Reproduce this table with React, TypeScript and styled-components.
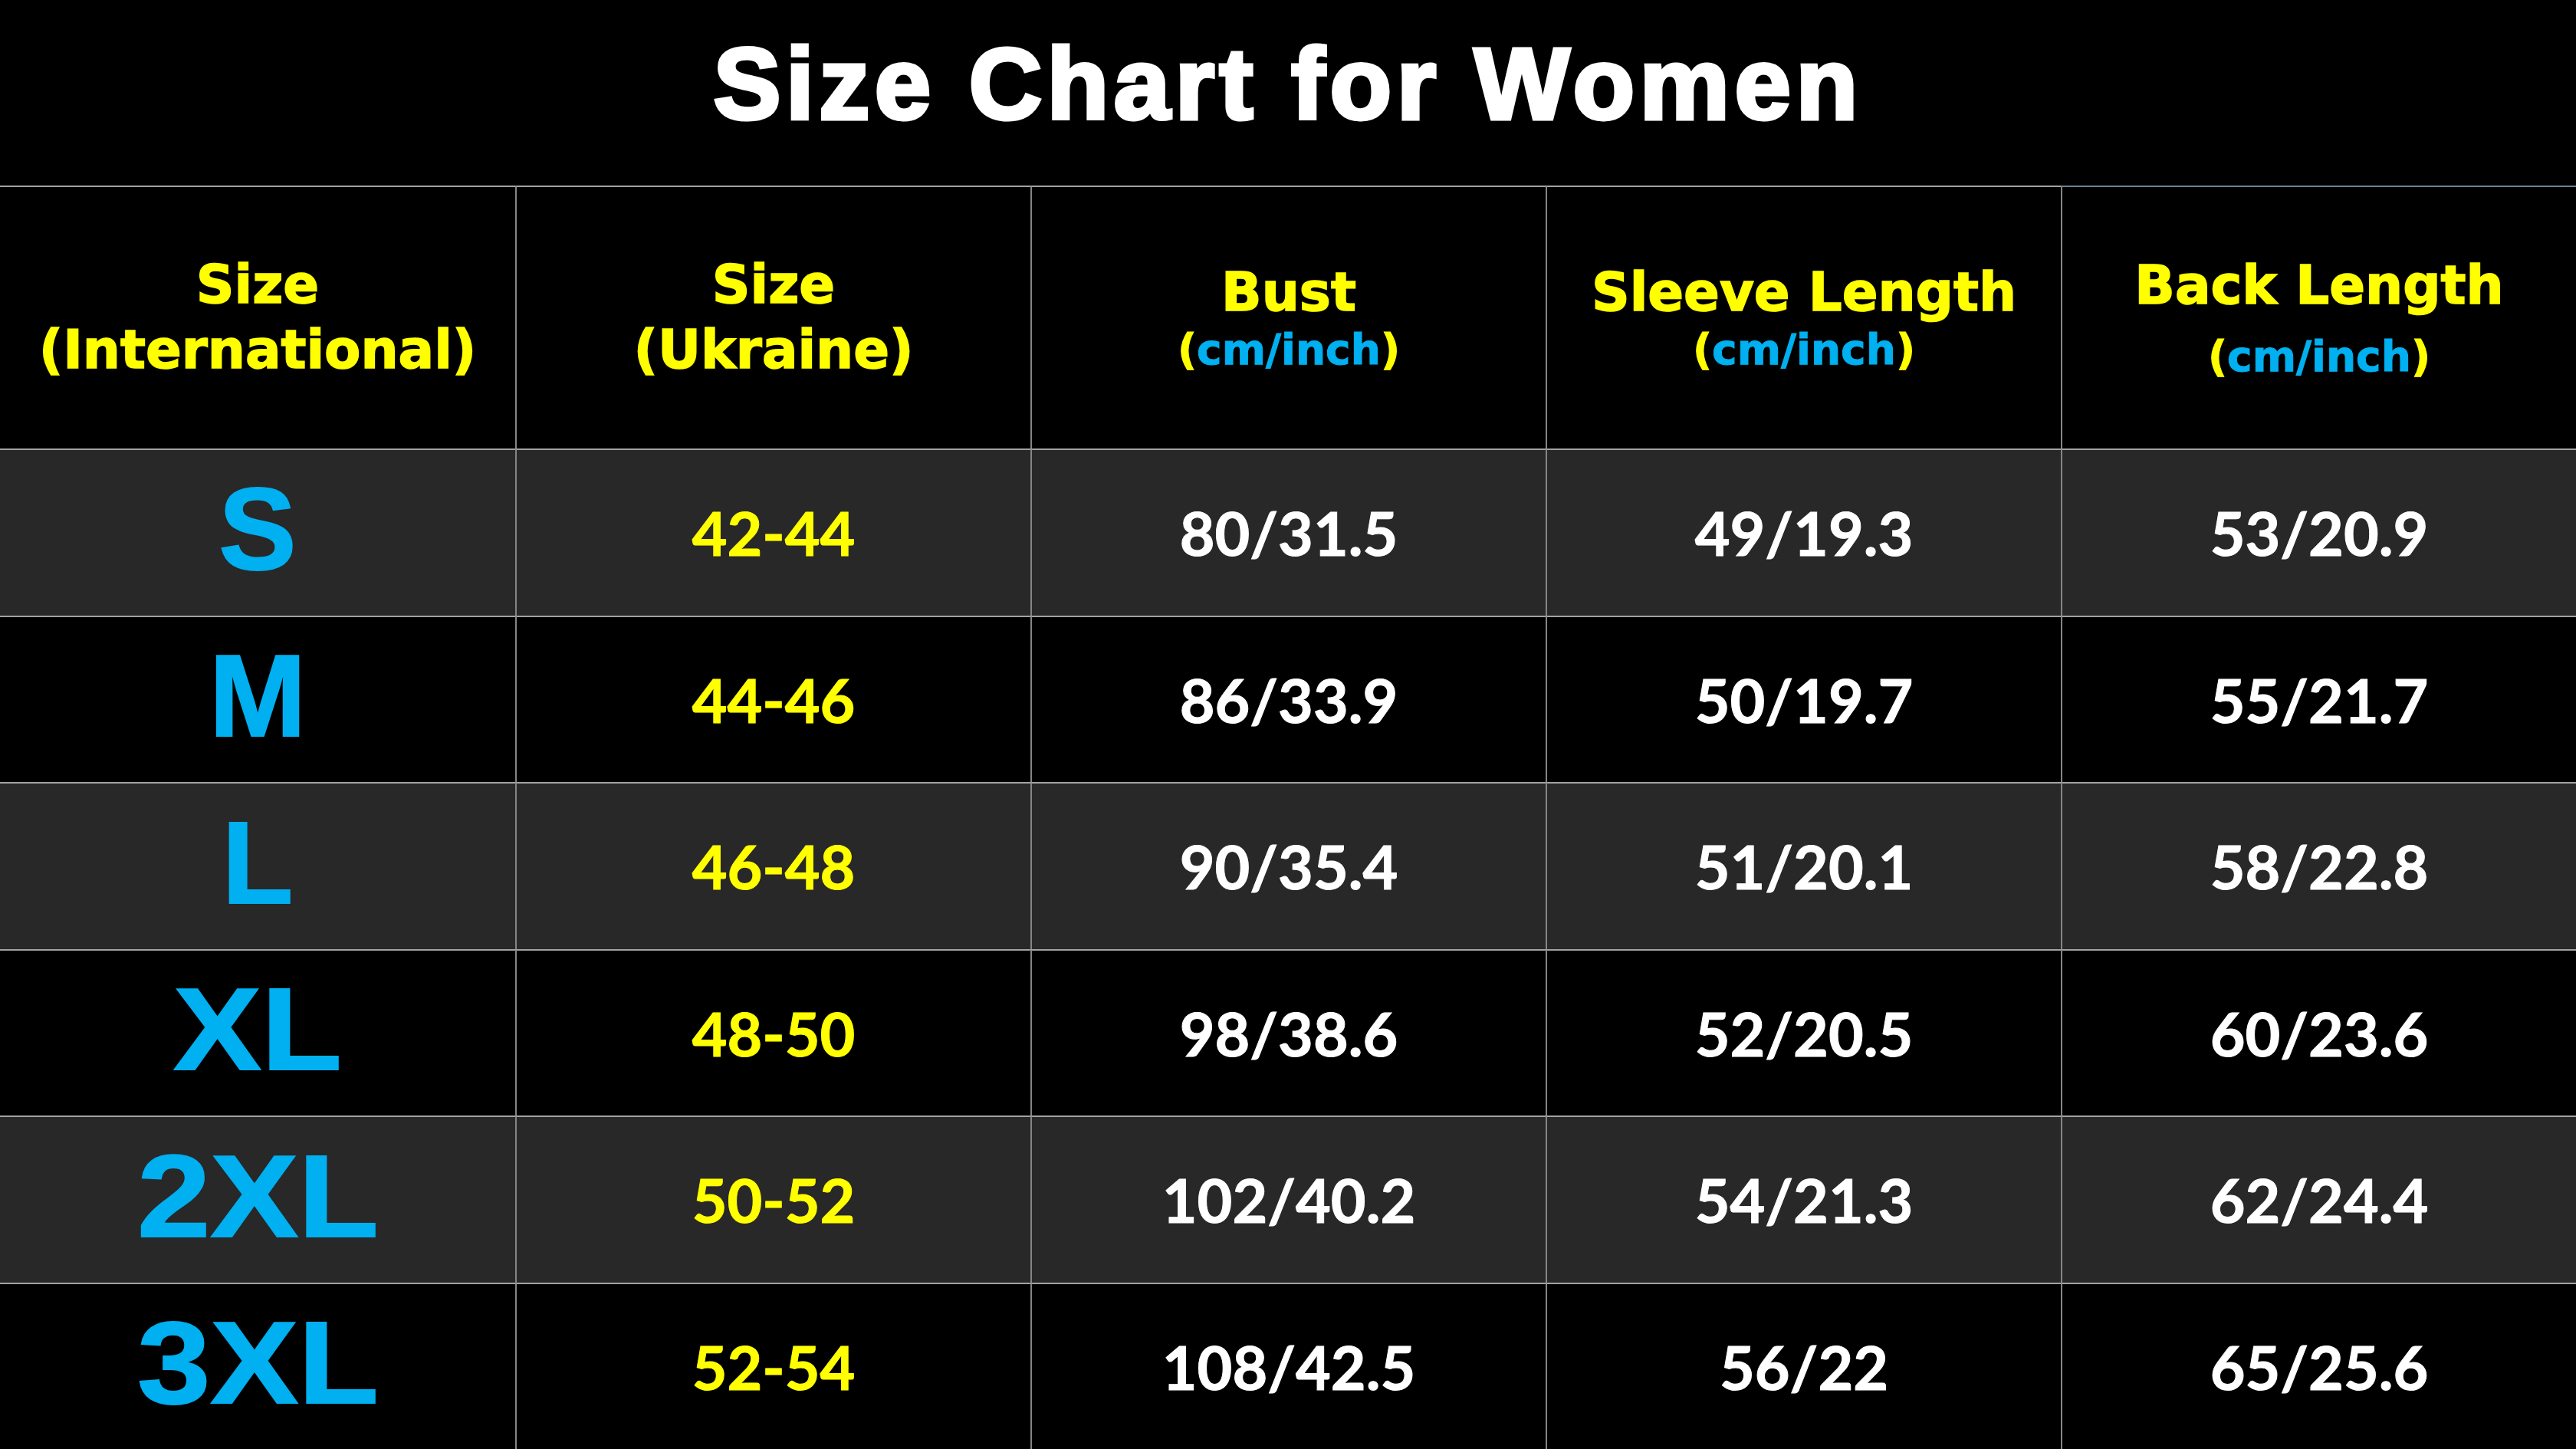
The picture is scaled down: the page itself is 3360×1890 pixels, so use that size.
import React from "react";
import styled, { createGlobalStyle } from "styled-components";

const GlobalStyle = createGlobalStyle`
  html, body {
    margin: 0;
    padding: 0;
    background: #000;
  }
  body {
    width: 3360px;
    height: 1890px;
    overflow: hidden;
  }
`;

const Page = styled.div`
  width: 3360px;
  height: 1890px;
  display: flex;
  flex-direction: column;
  background: #000;
`;

const TitleBar = styled.header`
  height: 242px;
  display: flex;
  align-items: center;
  justify-content: center;
  box-sizing: border-box;
  padding-bottom: 22px;
`;

const Title = styled.h1`
  margin: 0;
  font-family: "Liberation Sans", Arial, sans-serif;
  font-weight: 700;
  font-size: 132px;
  line-height: 1;
  color: #fff;
  letter-spacing: 6.5px;
  -webkit-text-stroke: 5px #fff;
`;

const Table = styled.div`
  flex: 1;
  display: grid;
  grid-template-columns: repeat(5, 1fr);
  grid-template-rows: 343px repeat(6, 1fr);
`;

const Cell = styled.div<{ $shade?: boolean; $first?: boolean; $topColor?: string; $lift?: number }>`
  box-sizing: border-box;
  display: flex;
  flex-direction: column;
  align-items: center;
  justify-content: center;
  padding-bottom: ${(p) => p.$lift || 0}px;
  background: ${(p) => (p.$shade ? "#282828" : "#000")};
  border-top: 2px solid ${(p) => p.$topColor || "#a3a3a3"};
  border-left: ${(p) => (p.$first ? "none" : "2px solid #858585")};
  min-width: 0;
`;

const HeadMain = styled.div`
  font-family: "DejaVu Sans", "Liberation Sans", sans-serif;
  font-weight: 700;
  font-size: 69px;
  line-height: 85px;
  color: #ffff00;
  white-space: nowrap;
  -webkit-text-stroke: 1.5px #ffff00;
`;

const HeadSub = styled.div<{ $offset: number }>`
  font-family: "DejaVu Sans", "Liberation Sans", sans-serif;
  font-weight: 700;
  font-size: 55px;
  line-height: 60px;
  color: #ffff00;
  white-space: nowrap;
  margin-top: ${(p) => p.$offset}px;
  -webkit-text-stroke: 1px currentColor;
`;

const Unit = styled.span`
  color: #00b0f0;
`;

const SizeLabel = styled.span<{ $wide?: boolean }>`
  display: inline-block;
  font-family: "Liberation Sans", Arial, sans-serif;
  font-weight: 700;
  font-size: 152px;
  line-height: 1;
  color: #00b0f0;
  margin-bottom: 10px;
  -webkit-text-stroke: 2px #00b0f0;
  transform: ${(p) => (p.$wide ? "scaleX(1.13)" : "none")};
`;

const Value = styled.span<{ $yellow?: boolean }>`
  font-family: "Lato", "Liberation Sans", sans-serif;
  font-weight: 700;
  font-size: 79px;
  line-height: 1;
  color: ${(p) => (p.$yellow ? "#ffff00" : "#ffffff")};
  white-space: nowrap;
  -webkit-text-stroke: 1px currentColor;
`;

type Row = {
  intl: string;
  ua: string;
  bust: string;
  sleeve: string;
  back: string;
};

const rows: Row[] = [
  { intl: "S", ua: "42-44", bust: "80/31.5", sleeve: "49/19.3", back: "53/20.9" },
  { intl: "M", ua: "44-46", bust: "86/33.9", sleeve: "50/19.7", back: "55/21.7" },
  { intl: "L", ua: "46-48", bust: "90/35.4", sleeve: "51/20.1", back: "58/22.8" },
  { intl: "XL", ua: "48-50", bust: "98/38.6", sleeve: "52/20.5", back: "60/23.6" },
  { intl: "2XL", ua: "50-52", bust: "102/40.2", sleeve: "54/21.3", back: "62/24.4" },
  { intl: "3XL", ua: "52-54", bust: "108/42.5", sleeve: "56/22", back: "65/25.6" },
];

const UnitLine: React.FC<{ offset: number }> = ({ offset }) => (
  <HeadSub $offset={offset}>
    (<Unit>cm/inch</Unit>)
  </HeadSub>
);

export default function App() {
  return (
    <>
      <GlobalStyle />
      <Page>
        <TitleBar>
          <Title>Size Chart for Women</Title>
        </TitleBar>
        <Table>
          <Cell $first $lift={2}>
            <HeadMain>Size</HeadMain>
            <HeadMain>(International)</HeadMain>
          </Cell>
          <Cell $lift={2}>
            <HeadMain>Size</HeadMain>
            <HeadMain>(Ukraine)</HeadMain>
          </Cell>
          <Cell $lift={4}>
            <HeadMain>Bust</HeadMain>
            <UnitLine offset={2} />
          </Cell>
          <Cell $lift={4}>
            <HeadMain>Sleeve Length</HeadMain>
            <UnitLine offset={2} />
          </Cell>
          <Cell $topColor="#6f7f9a" $lift={4}>
            <HeadMain>Back Length</HeadMain>
            <UnitLine offset={20} />
          </Cell>
          {rows.map((r, i) => {
            const shade = i % 2 === 0;
            return (
              <React.Fragment key={r.intl}>
                <Cell $first $shade={shade}>
                  <SizeLabel $wide={r.intl.length > 1}>{r.intl}</SizeLabel>
                </Cell>
                <Cell $shade={shade}>
                  <Value $yellow>{r.ua}</Value>
                </Cell>
                <Cell $shade={shade}>
                  <Value>{r.bust}</Value>
                </Cell>
                <Cell $shade={shade}>
                  <Value>{r.sleeve}</Value>
                </Cell>
                <Cell $shade={shade}>
                  <Value>{r.back}</Value>
                </Cell>
              </React.Fragment>
            );
          })}
        </Table>
      </Page>
    </>
  );
}
